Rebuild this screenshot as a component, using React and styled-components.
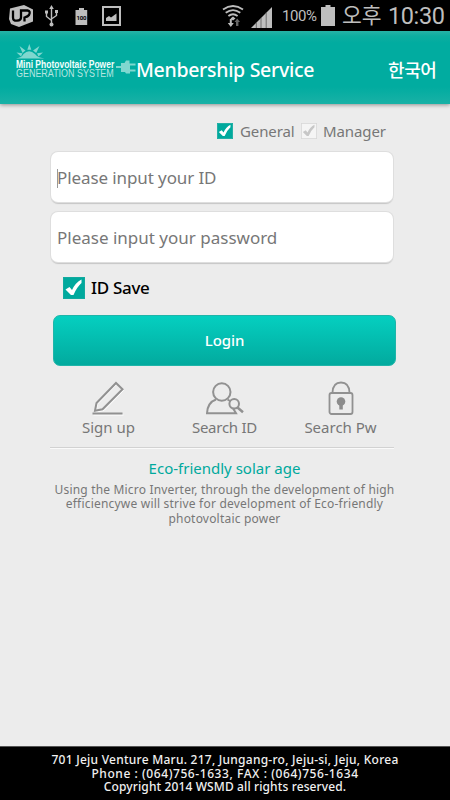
import React from "react";
import styled, { createGlobalStyle } from "styled-components";

const Global = createGlobalStyle`
  * { box-sizing: border-box; }
  body { margin: 0; background: #ececec; }
`;

const Screen = styled.div`
  width: 450px;
  height: 800px;
  display: flex;
  flex-direction: column;
  background: #ececec;
  overflow: hidden;
  font-family: "Noto Sans", "Noto Sans CJK KR", sans-serif;
`;

const StatusBar = styled.div`
  height: 31px;
  flex: none;
  display: flex;
  background: #000;
  color: #bebebe;
  font-family: Roboto, "Noto Sans CJK KR", sans-serif;
  svg { display: block; flex: none; }
`;

const StatusGroup = styled.div`
  display: flex;
  margin-left: ${(p) => p.$gap || 0}px;
`;

const StatusText = styled.span`
  width: ${(p) => p.$width}px;
  margin-left: ${(p) => p.$gap}px;
  font-size: ${(p) => p.$size}px;
  letter-spacing: ${(p) => p.$spacing || 0}px;
  line-height: 32px;
  white-space: nowrap;
`;

const Header = styled.header`
  height: 73px;
  flex: none;
  display: flex;
  background: linear-gradient(#27b2a6 0, #0dada0 5px, #01aca0 12px, #01aca0 56px, #19b1a6 73px);
  box-shadow: 0 1px 4px rgba(0, 0, 0, 0.4);
  svg { display: block; flex: none; }
`;

const Brand = styled.div`
  width: 101px;
  margin: 13px 0 0 15px;
  font-family: "Liberation Sans", sans-serif;
`;

const BrandLine = styled.div`
  height: ${(p) => p.$height}px;
  margin-left: 1px;
  font-size: 10px;
  line-height: ${(p) => p.$height}px;
  font-weight: ${(p) => (p.$bold ? 700 : 400)};
  color: ${(p) => p.$color};
  white-space: nowrap;
  transform: scaleX(${(p) => p.$stretch});
  transform-origin: left;
`;

const Title = styled.h1`
  width: 252px;
  margin: 0;
  font-size: 19.5px;
  font-weight: 500;
  line-height: 77px;
  letter-spacing: -0.3px;
  color: #fff;
  white-space: nowrap;
`;

const Language = styled.span`
  font-family: "Noto Sans CJK KR", sans-serif;
  font-size: 18px;
  font-weight: 500;
  line-height: 77px;
  letter-spacing: -0.4px;
  color: #fff;
  white-space: nowrap;
`;

const Main = styled.main`
  flex: 1;
  padding: 18px 50px 0;
  display: flex;
  flex-direction: column;
`;

const Roles = styled.div`
  height: 17px;
  display: flex;
  align-items: center;
  padding-left: 167px;
`;

const Label = styled.span`
  width: ${(p) => (p.$width ? `${p.$width}px` : "auto")};
  margin-left: ${(p) => p.$gap || 0}px;
  font-size: ${(p) => p.$size}px;
  line-height: ${(p) => p.$line || 20}px;
  font-weight: ${(p) => p.$weight || 400};
  letter-spacing: ${(p) => p.$spacing || 0}px;
  color: ${(p) => p.$color || "#777"};
  white-space: nowrap;
`;

const Field = styled.div`
  width: 342px;
  height: 50px;
  margin: ${(p) => p.$top}px 0 0 1px;
  padding: 2px 0 0 6px;
  display: flex;
  align-items: center;
  border-radius: 7px;
  background: #fff;
  box-shadow: 0 0 0 1px #dedede, 0 2px 1px #c6c6c6;
`;

const Caret = styled.span`
  width: 1px;
  height: 19px;
  margin-right: -1px;
  background: #999;
`;

const SaveRow = styled.div`
  height: 22px;
  margin-top: 15px;
  padding-left: 13px;
  display: flex;
  align-items: center;
`;

const LoginButton = styled.button`
  width: 343px;
  height: 51px;
  margin: 16px 0 0 3px;
  padding: 0 0 2px;
  border: 1px solid #1fb5a9;
  border-radius: 7px;
  background: linear-gradient(#05cfc0, #02aa9e);
  font-family: inherit;
`;

const Links = styled.nav`
  height: 71px;
  margin-top: 10px;
  padding-top: 5px;
  display: grid;
  grid-template-columns: 117px 115px 117px;
`;

const LinkItem = styled.div`
  display: flex;
  flex-direction: column;
  align-items: center;
  svg { display: block; flex: none; }
`;

const Rule = styled.div`
  width: 344px;
  height: 2px;
  background: #d2d2d2;
  border-bottom: 1px solid #fafafa;
`;

const About = styled.section`
  width: 349px;
  display: flex;
  flex-direction: column;
  align-items: center;
  padding-top: 9px;
`;

const AboutLines = styled.div`
  margin-top: 5px;
  display: flex;
  flex-direction: column;
  align-items: center;
`;

const Footer = styled.footer`
  height: 54px;
  flex: none;
  padding-top: 6px;
  display: flex;
  flex-direction: column;
  align-items: center;
  background: #000;
  border-top: 1px solid #555;
`;

const CheckBox = ({ size, on }) => (
  <svg width={size} height={size} viewBox="0 0 22 22">
    <rect x="0.5" y="0.5" width="21" height="21" fill={on ? "#00a99d" : "#f5f5f5"} stroke={on ? "#12aa9f" : "#d6d6d6"} />
    <path d="M2.500 12.500 6.500 10 9 13Q12.500 5.500 18.500 2.500V6Q13.500 10.500 10.500 18H8Z" fill={on ? "#fff" : "#c7c7c7"} />
  </svg>
);

const StatusIcons = () => (
  <svg width="130" height="31" viewBox="0 0 130 31">
    <path d="M10 8.500 24 5l9 4.500v12L19 27l-8-3-2-5Z" fill="#bebebe" />
    <path d="M13 10.500v7q0 3.500 4 3.200 4-.3 4-3.200v-7h6.500q3.500.5 1.500 4.500-1 1.500-4.500 2.500v4" fill="none" stroke="#000" strokeWidth="2.300" />
    <g fill="none" stroke="#bebebe" strokeWidth="1.400">
      <path d="M51.500 8v16M46.500 12v4.500l5 4M56.500 12v3.500l-5 3.500" />
    </g>
    <path d="m51.500 5 2.300 4h-4.600ZM45 10.500h3v3h-3ZM55 10h3v3h-3Z" fill="#bebebe" />
    <circle cx="51.500" cy="24.500" r="2" fill="#bebebe" />
    <path d="M75.500 10H79V8h5v2h3.200v15H75.500Z" fill="#bebebe" />
    <text x="76.500" y="19.500" fontSize="6" fontWeight="700" fill="#000" textLength="10">100</text>
    <rect x="103" y="7" width="17" height="18" fill="none" stroke="#bebebe" strokeWidth="2" />
    <path d="M106 21v-3l3-2 2 1.500 5.500-4V21Z" fill="#bebebe" />
  </svg>
);

const SignalIcons = () => (
  <svg width="54" height="31" viewBox="220 0 54 31">
    <g fill="none" stroke="#bebebe" strokeWidth="1.800">
      <path d="M223 9.500Q233 2.500 243 9.500M225.700 12.800Q233 7.400 240.300 12.800M228.400 16Q233 12.400 237.600 16" />
    </g>
    <path d="M230.500 18.500 233 16.500l2.500 2-2.500 2ZM229.800 19h2v4h2l-3 4-3-4h2Z" fill="#bebebe" />
    <path d="M236 26v-4h-1.500l2.700-3.500L240 22h-1.600v4Z" fill="#666" />
    <path d="M251 28 272 7v21Z" fill="#bebebe" />
    <path d="M256.300 22.500V28M261 18v10M266.200 12.500V28" stroke="#555" strokeWidth="0.800" />
  </svg>
);

const SunIcon = () => (
  <svg width="31" height="16" viewBox="0 0 31 16">
    <path d="M1 14.500Q7 13.500 8.500 10 14 4.500 20 10 22 13.500 29.500 14.500Z" fill="#80d7cf" />
    <path d="m14.300 0 2 5.800h-4ZM4.500 2l6 4.500-3 2.500ZM24.500 2 18 6.500l3.200 2.500ZM1.500 8.500l6 .8-1.500 3.200ZM28 8.500l-6 .8 1.500 3.200Z" fill="#80d7cf" />
  </svg>
);

const PlugIcon = () => (
  <svg width="20" height="73" viewBox="116 31 20 73">
    <path d="M116 66h5v-3h3.500l1.500-2.500h3.500v3h6v2H130v4h5.500v2H130v2h-4l-1-1.500h-4V68h-5Z" fill="#80d7cf" />
  </svg>
);

const PencilIcon = () => (
  <svg width="36" height="36" viewBox="0 0 36 36">
    <path d="M4 30 5.500 22 25 2 31.500 8.500 12 28.500ZM1.500 33H31.500" fill="none" stroke="#fff" strokeWidth="1" transform="translate(1 1)" />
    <path d="M4 29.800 5.500 22 25 2 31.500 8.200 11.500 28.300Z" fill="none" stroke="#919191" strokeWidth="2" />
    <path d="M1.500 32.500h30" stroke="#919191" strokeWidth="2" />
  </svg>
);

const UserIcon = () => (
  <svg width="40" height="36" viewBox="0 0 40 36">
    <g fill="none" stroke="#919191" strokeWidth="2">
      <circle cx="16.800" cy="11" r="8.700" />
      <path d="M11 18.500Q2.500 21.500 2 32.300h29l-3-5M22.500 18.500l3.500 2" />
      <circle cx="29.200" cy="22.800" r="4.800" fill="#ececec" />
      <path d="m32.500 26.500 5.500 4.800" strokeWidth="2.500" />
    </g>
  </svg>
);

const LockIcon = () => (
  <svg width="26" height="36" viewBox="0 0 26 36">
    <rect x="1.500" y="12" width="23" height="21" rx="2" fill="none" stroke="#919191" strokeWidth="1.800" />
    <path d="M4.500 11.500Q5 1.500 13 1.500t8.500 10" fill="none" stroke="#919191" strokeWidth="1.800" />
    <circle cx="13" cy="20.500" r="4.300" fill="#8c8c8c" />
    <path d="M11.300 21.500h3.500v7h-3.500Z" fill="#8c8c8c" />
  </svg>
);

const BatteryIcon = () => (
  <svg width="15" height="31" viewBox="0 0 15 31">
    <path d="M0 7h4.500V5h5v2H14v19H0Z" fill="#bebebe" />
  </svg>
);

const links = [
  { text: "Sign up", icon: <PencilIcon />, spacing: 0 },
  { text: "Search ID", icon: <UserIcon />, spacing: -0.25 },
  { text: "Search Pw", icon: <LockIcon />, spacing: 0 },
];

const aboutLines = [
  { text: "Using the Micro Inverter, through the development of high", spacing: 0.18 },
  { text: "efficiencywe will strive for development of Eco-friendly", spacing: 0.2 },
  { text: "photovoltaic power", spacing: 0.2 },
];

const footerLines = [
  { text: "701 Jeju Venture Maru. 217, Jungang-ro, Jeju-si, Jeju, Korea", spacing: 0.25 },
  { text: "Phone : (064)756-1633, FAX : (064)756-1634", spacing: 0.57 },
  { text: "Copyright 2014 WSMD all rights reserved.", spacing: 0.12 },
];

export default function App() {
  return (
    <Screen>
      <Global />
      <StatusBar>
        <StatusIcons />
        <StatusGroup $gap={90}>
          <SignalIcons />
          <StatusText $width={39} $gap={8} $size={15} $spacing={-0.4}>100%</StatusText>
          <BatteryIcon />
          <StatusText $width={42} $gap={6} $size={21.5}>오후</StatusText>
          <StatusText $width={60} $gap={4} $size={23.5} $spacing={-0.4}>10:30</StatusText>
        </StatusGroup>
      </StatusBar>
      <Header>
        <Brand>
          <SunIcon />
          <BrandLine $height={10} $bold $stretch={0.85} $color="#f2fffd">Mini Photovoltaic Power</BrandLine>
          <BrandLine $height={7} $stretch={0.895} $color="#b6e6e1">GENERATION SYSTEM</BrandLine>
        </Brand>
        <PlugIcon />
        <Title>Menbership Service</Title>
        <Language>한국어</Language>
      </Header>
      <Main>
        <Roles>
          <CheckBox size={16} on />
          <Label $gap={7} $width={61} $size={15} $spacing={-0.1}>General</Label>
          <CheckBox size={16} />
          <Label $gap={6} $size={15} $spacing={-0.1}>Manager</Label>
        </Roles>
        <Field $top={13}>
          <Caret />
          <Label $size={17} $spacing={-0.1}>Please input your ID</Label>
        </Field>
        <Field $top={10}>
          <Label $size={17}>Please input your password</Label>
        </Field>
        <SaveRow>
          <CheckBox size={22} on />
          <Label $gap={6} $size={17} $color="#000" $weight={500} $spacing={-0.3}>ID Save</Label>
        </SaveRow>
        <LoginButton>
          <Label $size={15} $color="#fff" $weight={500} $spacing={-0.1}>Login</Label>
        </LoginButton>
        <Links>
          {links.map((l) => (
            <LinkItem key={l.text}>
              {l.icon}
              <Label $size={15} $line={20} $spacing={l.spacing}>{l.text}</Label>
            </LinkItem>
          ))}
        </Links>
        <Rule />
        <About>
          <Label $size={15} $color="#00a99d">Eco-friendly solar age</Label>
          <AboutLines>
            {aboutLines.map((l) => (
              <Label key={l.text} $size={12} $line={14.4} $spacing={l.spacing}>{l.text}</Label>
            ))}
          </AboutLines>
        </About>
      </Main>
      <Footer>
        {footerLines.map((l) => (
          <Label key={l.text} $size={12} $line={13.7} $color="#f0f0f0" $weight={500} $spacing={l.spacing}>{l.text}</Label>
        ))}
      </Footer>
    </Screen>
  );
}
